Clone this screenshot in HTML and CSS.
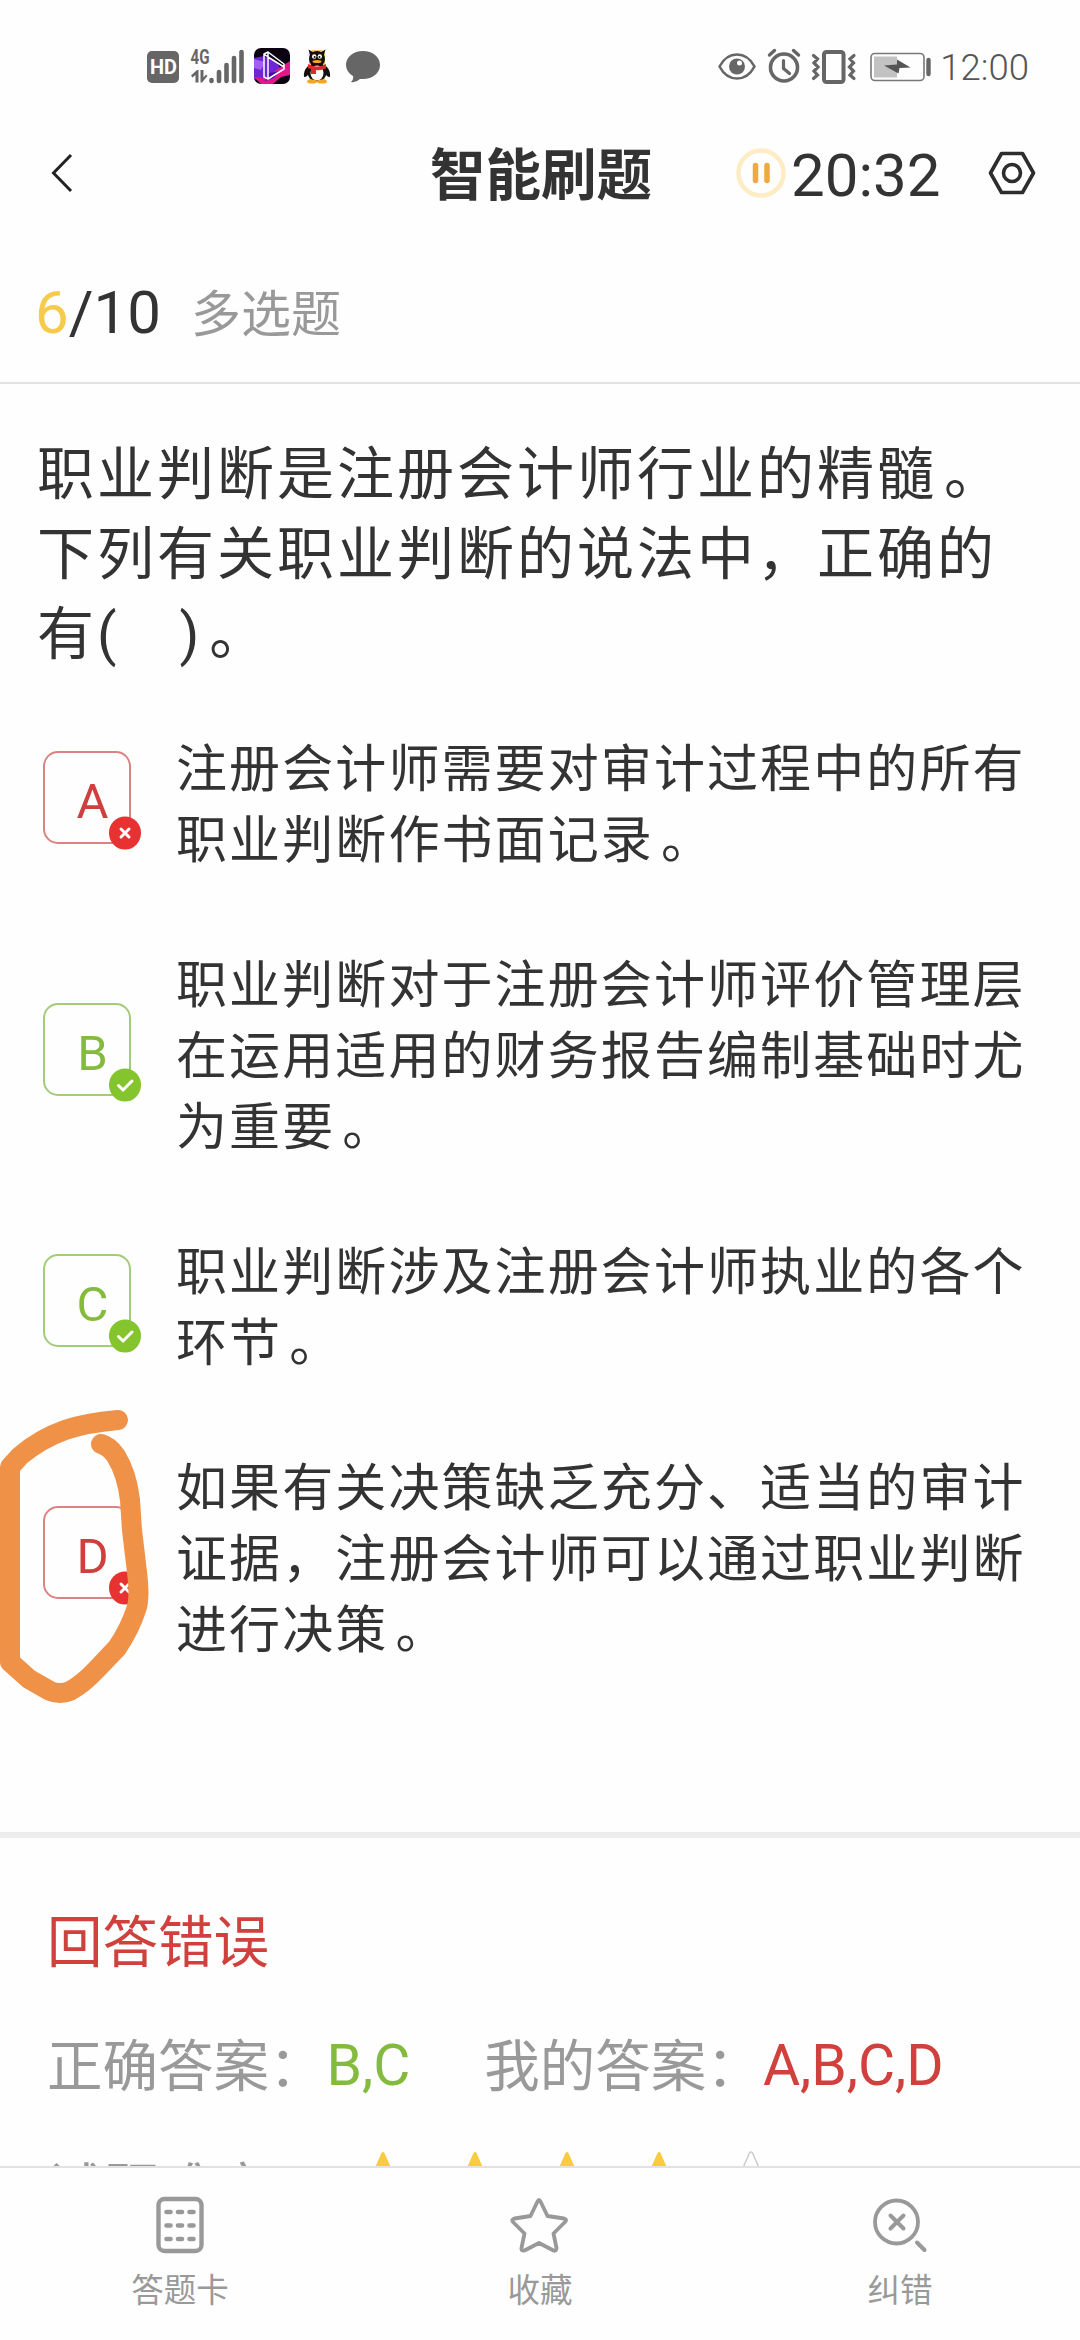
FILE: index.html
```html
<!DOCTYPE html>
<html lang="zh-CN">
<head>
<meta charset="UTF-8">
<title>智能刷题</title>
<link rel="stylesheet" href="styles.css">
</head>
<body>
<div class="page">

    <div class="status-bar">
        <svg class="status-left" width="250" height="44" viewBox="0 0 250 44">
            <!-- HD -->
            <rect x="7" y="6" width="32" height="32" rx="5" fill="#666"/>
            <text x="10" y="29" class="hd" textLength="27" lengthAdjust="spacingAndGlyphs">HD</text>
            <!-- signal -->
            <text x="50.5" y="19" class="net" textLength="19" lengthAdjust="spacingAndGlyphs">4G</text>
            <path d="M51 30.500l6-5.500h1.500v12.500h-3v-7.500l-3 2.500zM60.500 25h3v7.500l2.500-3 1.500 1.500-5.500 6.500h-1.500z" fill="#666"/>
            <path d="M71.500 36v-1M79 36v-9M86.500 36V20M94 36V13M101.500 36V7" stroke="#666" stroke-width="4.600" stroke-linecap="round"/>
            <!-- video app -->
            <clipPath id="app"><rect x="114" y="3" width="36" height="36" rx="7"/></clipPath>
            <g clip-path="url(#app)">
                <rect x="114" y="3" width="36" height="36" fill="#0b0312"/>
                <path d="M114 13l10-2 13 6 6 12-12 8-17-3z" fill="#6d25d8"/>
                <path d="M114 14l11 3-4 8-7-2z" fill="#a35cf5"/>
                <path d="M114 32l12 1 10-8 14-9v14l-9 2-8 7h-12z" fill="#e0188a"/>
                <path d="M129 28l11-2-6 7-9 3z" fill="#3f13a8"/>
                <path d="M124 9l4-2 16 12v5l-16 10-4-2zM124 9l4 3 16 10M128 12v22M128 12v-5" fill="none" stroke="#fff" stroke-width="1.500" stroke-linejoin="round"/>
            </g>
            <!-- penguin -->
            <path d="M169 8l3-3h10l3 3v10l2 8-2 4v7h-16v-7l-2-4 2-8z" fill="#f7c66b"/>
            <ellipse cx="177" cy="27" rx="9.500" ry="9.500" fill="#111"/>
            <path d="M168 21q-5 5-4 11 4 0 5-5zM186 21q5 5 4 11-4 0-5-5z" fill="#111"/>
            <ellipse cx="177" cy="14" rx="8" ry="8" fill="#111"/>
            <path d="M168.500 4.500l5 3-3 4zM185.500 4.500l-5 3 3 4z" fill="#111"/>
            <ellipse cx="177" cy="28" rx="6.500" ry="7.500" fill="#fff"/>
            <circle cx="174.200" cy="11.500" r="2.200" fill="#fff"/>
            <circle cx="179.800" cy="11.500" r="2.200" fill="#fff"/>
            <circle cx="174.600" cy="12" r="1" fill="#111"/>
            <circle cx="179.500" cy="12" r="1" fill="#111"/>
            <ellipse cx="177" cy="16.500" rx="4.500" ry="1.500" fill="#f5a623"/>
            <path d="M168 19q9 5 18 0v4q-5 3-10 2v4h-5v-5l-3-1z" fill="#e02b2b"/>
            <ellipse cx="172" cy="36.500" rx="5" ry="2" fill="#f5a623"/>
            <ellipse cx="182" cy="36.500" rx="5" ry="2" fill="#f5a623"/>
            <!-- message bubble -->
            <path d="M223 6c9.500 0 17 6 17 14s-7.500 14-17 14l-3 0q-4 4-9 3 3-3 2-6-7-4-7-11c0-8 7.500-14 17-14z" fill="#666"/>
        </svg>
        <div class="status-right">
            <svg width="218" height="44" viewBox="0 0 218 44" fill="none" stroke="#666">
                <!-- eye -->
                <path d="M3.500 21.500C12 5.500 30 5.500 38.500 21.500 30 37.500 12 37.500 3.500 21.500z" stroke-width="2.600" stroke-linejoin="round"/>
                <circle cx="21" cy="21.500" r="8" fill="#666" stroke="none"/>
                <circle cx="23.500" cy="18" r="2.500" fill="#fff" stroke="none"/>
                <!-- alarm -->
                <circle cx="68" cy="22.500" r="13.500" stroke-width="3.600"/>
                <path d="M67.500 15.500v8l6 5" stroke-width="3.200" stroke-linecap="round"/>
                <path d="M53.500 10l5-4.500M82.500 10l-5-4.500" stroke-width="3.400" stroke-linecap="round"/>
                <!-- vibrate -->
                <rect x="108" y="7" width="19.500" height="30" rx="2.500" stroke-width="4"/>
                <path d="M97.500 10.500l4 3.500-3.500 4 4 4-4 4 3.500 4-4 3.500M138 10.500l-4 3.500 3.500 4-4 4 4 4-3.500 4 4 3.500" stroke-width="3.200" stroke-linecap="round"/>
                <!-- battery -->
                <rect x="155" y="8.500" width="53" height="27" rx="4" stroke-width="1.600" stroke="#777"/>
                <rect x="158" y="11.500" width="23" height="21" fill="#c2c2c2" stroke="none"/>
                <path d="M168 20.500l13 -1 0-5 13.500 8-11 .5-1 5.500z" fill="#555" stroke="none"/>
                <path d="M212.500 15v14" stroke-width="4.400" stroke-linecap="round"/>
            </svg>
            <span class="clock">12:00</span>
        </div>
    </div>

    <div class="header">
        <svg class="back" width="30" height="44" viewBox="0 0 30 44">
            <path d="M26 4L8.500 22 26 40" fill="none" stroke="#222" stroke-width="3"/>
        </svg>
        <h1>智能刷题</h1>
        <div class="timer">
            <svg width="50" height="50" viewBox="0 0 50 50">
                <circle cx="25" cy="25" r="22.500" fill="none" stroke="#fdecc4" stroke-width="4.500"/>
                <path d="M19.500 17.500v15M31 17.500v15" stroke="#f0a93c" stroke-width="5.500" stroke-linecap="round"/>
            </svg>
            <span>20:32</span>
        </div>
        <svg class="setting" width="48" height="44" viewBox="0 0 48 44" fill="none" stroke="#2d2d2d">
            <path d="M13.500 2.500h21L45.500 22 34.500 41.500h-21L2.500 22z" stroke-width="3.600" stroke-linejoin="round"/>
            <circle cx="24" cy="22" r="8.500" stroke-width="3.600"/>
        </svg>
    </div>

    <div class="progress">
        <span class="current">6</span><span class="total">/10</span>
        <span class="type">多选题</span>
    </div>

    <div class="content">
        <p class="question">职业判断是注册会计师行业的精髓<span class="stop">。</span><br>下列有关职业判断的说法中，正确的<br>有(&#12288;)<span class="stop">。</span></p>

        <ul class="options">
            <li>
                <div class="mark wrong">A
                    <svg class="badge" width="32" height="34" viewBox="0 0 32 34"><ellipse cx="16" cy="17" rx="16" ry="16.500"/><path d="M12 13l8 8M20 13l-8 8"/></svg>
                </div>
                <p>注册会计师需要对审计过程中的所有<br>职业判断作书面记录<span class="stop">。</span></p>
            </li>
            <li>
                <div class="mark right">B
                    <svg class="badge" width="32" height="34" viewBox="0 0 32 34"><ellipse cx="16" cy="17" rx="16" ry="16.500"/><path d="M9.500 17.500l4.500 4.500 9-9"/></svg>
                </div>
                <p>职业判断对于注册会计师评价管理层<br>在运用适用的财务报告编制基础时尤<br>为重要<span class="stop">。</span></p>
            </li>
            <li>
                <div class="mark right">C
                    <svg class="badge" width="32" height="34" viewBox="0 0 32 34"><ellipse cx="16" cy="17" rx="16" ry="16.500"/><path d="M9.500 17.500l4.500 4.500 9-9"/></svg>
                </div>
                <p>职业判断涉及注册会计师执业的各个<br>环节<span class="stop">。</span></p>
            </li>
            <li>
                <div class="mark wrong">D
                    <svg class="badge" width="32" height="34" viewBox="0 0 32 34"><ellipse cx="16" cy="17" rx="16" ry="16.500"/><path d="M12 13l8 8M20 13l-8 8"/></svg>
                </div>
                <p>如果有关决策缺乏充分、适当的审计<br>证据，注册会计师可以通过职业判断<br>进行决策<span class="stop">。</span></p>
            </li>
        </ul>

        <div class="result">
            <h2>回答错误</h2>
            <div class="answers">
                <span class="label">正确答案：</span><span class="green">B,C</span>
                <span class="label mine">我的答案：</span><span class="red">A,B,C,D</span>
            </div>
            <div class="difficulty">
                <span class="label">试题难度：</span>
                <svg width="430" height="56" viewBox="0 0 430 56">
                    <defs><path id="star" d="M-1.500 2Q0 0 1.500 2L9 19 27 21.500 13.500 34.500 17 54 0 44.500-17 54-13.500 34.500-27 21.500-9 19z"/></defs>
                    <g fill="#f9cb3e">
                        <use href="#star" x="30"/>
                        <use href="#star" x="122"/>
                        <use href="#star" x="214"/>
                        <use href="#star" x="306"/>
                    </g>
                    <use href="#star" x="398" fill="none" stroke="#ccc" stroke-width="1.500"/>
                </svg>
            </div>
        </div>
    </div>

    <div class="tab-bar">
        <div class="tab">
            <svg width="60" height="60" viewBox="0 0 60 60" fill="none" stroke="#999">
                <rect x="8.500" y="4" width="43" height="52" rx="6" stroke-width="4.400"/>
                <path d="M16.500 17h4M28 17h4M39.500 17h4M16.500 30.500h4M28 30.500h4M39.500 30.500h4M16.500 44h4M28 44h4M39.500 44h4" stroke-width="4.600" stroke-linecap="round"/>
            </svg>
            <span>答题卡</span>
        </div>
        <div class="tab">
            <svg width="60" height="60" viewBox="0 0 60 60" fill="none" stroke="#999">
                <path d="M27.500 6.500Q29 3.500 30.500 6.500L37.500 21 54 23.500Q57.500 24.500 55 27L43.500 38.500 46.500 53Q46.500 56.500 43.500 55.500L29 48 14.500 55.500Q11 56.500 11.500 53L14.500 38.500 3 27Q1 24.500 4.500 23.500L20.500 21z" stroke-width="3.800" stroke-linejoin="round"/>
            </svg>
            <span>收藏</span>
        </div>
        <div class="tab">
            <svg width="60" height="60" viewBox="0 0 60 60" fill="none" stroke="#999" stroke-linecap="round">
                <circle cx="26.500" cy="27" r="21.500" stroke-width="3.800"/>
                <path d="M20.500 20.500l13 13M33.500 20.500l-13 13" stroke-width="4"/>
                <path d="M47 47.500l7.500 7.500" stroke-width="4"/>
            </svg>
            <span>纠错</span>
        </div>
    </div>

    <!-- hand drawn circle around D -->
    <svg class="scribble" width="160" height="300" viewBox="0 1405 160 300">
        <path d="M118 1420Q85 1423 65 1430 40 1439 20 1456L10 1467V1662L29 1679 50 1691Q60 1695 70 1691 83 1684 97 1669L117 1648Q130 1629 137 1607 140 1595 137 1572L132 1530 130 1500Q127 1474 116 1456 109 1446 101 1444"/>
    </svg>
</div>
</body>
</html>
```
FILE: styles.css
```css
* {
    box-sizing: border-box;
    margin: 0;
    padding: 0;
}

body {
    font-family: Roboto, "Noto Sans CJK SC", sans-serif;
    background-color: #fefefe;
    color: #333;
}

.page {
    position: relative;
    display: flex;
    flex-direction: column;
    width: 1080px;
    height: 2340px;
    overflow: hidden;
}

.status-bar {
    display: flex;
    justify-content: space-between;
    align-items: center;
    height: 134px;
    padding: 0 51px 0 140px;
}

.status-right {
    display: flex;
    align-items: center;
    gap: 6px;
}

.clock {
    font-size: 36.500px;
    font-weight: 300;
    color: #555;
}

.hd {
    font: bold 21px Roboto, sans-serif;
    fill: #fff;
}

.net {
    font: bold 20px Roboto, sans-serif;
    fill: #666;
}

.header {
    display: grid;
    grid-template-columns: 430px 306px 252px 48px;
    align-items: center;
    height: 78px;
}

.back {
    margin-left: 45px;
}

.header h1 {
    padding-top: 8px;
    font-size: 55.500px;
    line-height: 70px;
}

.timer {
    display: flex;
    align-items: center;
    gap: 5px;
    font-size: 60px;
}

.timer span {
    padding-top: 4px;
}

.progress {
    display: flex;
    align-items: center;
    height: 172px;
    padding: 30px 0 0 35px;
    border-bottom: 2px solid #e2e2e2;
    font-size: 60px;
}

.progress .current {
    color: #f6cb4c;
}

.progress .type {
    margin: 0 0 5px 30px;
    font-size: 50px;
    color: #999;
}

.content {
    flex: 1;
    overflow: hidden;
}

.question {
    padding: 51px 0 0 37px;
    font-size: 57px;
    letter-spacing: 3px;
    line-height: 80px;
}

.stop {
    margin-left: 7px;
}

.options {
    display: flex;
    flex-direction: column;
    gap: 74px;
    padding: 59px 0 0 43px;
    list-style: none;
}

.options li {
    display: flex;
    align-items: center;
    gap: 45px;
    font-size: 51px;
    letter-spacing: 2.100px;
    line-height: 71px;
    white-space: nowrap;
}

.mark {
    position: relative;
    width: 88px;
    height: 93px;
    margin-bottom: 15px;
    padding-left: 11px;
    border: 2px solid;
    border-radius: 15px;
    font-size: 49px;
    letter-spacing: 0;
    line-height: 97px;
    text-align: center;
}

.mark.wrong {
    color: #cf3f3d;
    border-color: #d98482;
}

.mark.right {
    color: #84bb3e;
    border-color: #a3cb78;
}

.badge {
    position: absolute;
    right: -12px;
    bottom: -8px;
    fill: #84c52e;
}

.badge path {
    fill: none;
    stroke: #fff;
    stroke-width: 3;
    stroke-linecap: round;
}

.wrong .badge {
    fill: #e83232;
}

.result {
    margin-top: 166px;
    padding: 66px 0 0 47px;
    border-top: 6px solid #ededed;
}

.result h2 {
    font-size: 55.500px;
    font-weight: normal;
    line-height: 80px;
    color: #d0403c;
}

.answers {
    display: flex;
    align-items: center;
    height: 80px;
    margin-top: 41px;
    font-size: 57px;
}

.label {
    padding-bottom: 6px;
    font-size: 55.500px;
    color: #999;
}

.answers .green {
    margin-left: 2px;
}

.label.mine {
    margin-left: 74px;
}

.green {
    color: #84bb3e;
}

.red {
    margin-left: 1px;
    color: #d0403c;
}

.difficulty {
    display: flex;
    align-items: flex-start;
    margin-top: 46px;
}

.difficulty svg {
    margin-left: 28px;
}

.difficulty .label {
    line-height: 80px;
}

.tab-bar {
    display: grid;
    grid-template-columns: repeat(3, 1fr);
    height: 174px;
    border-top: 2px solid #e2e2e2;
    background-color: #fefefe;
}

.tab {
    display: flex;
    flex-direction: column;
    align-items: center;
    padding-top: 27px;
    font-size: 32.500px;
    line-height: 44px;
    color: #999;
}

.tab span {
    margin-top: 14px;
}

.scribble {
    position: absolute;
    left: 0;
    top: 1405px;
}

.scribble path {
    fill: none;
    stroke: #f09148;
    stroke-width: 20;
    stroke-linecap: round;
    stroke-linejoin: round;
}
```
